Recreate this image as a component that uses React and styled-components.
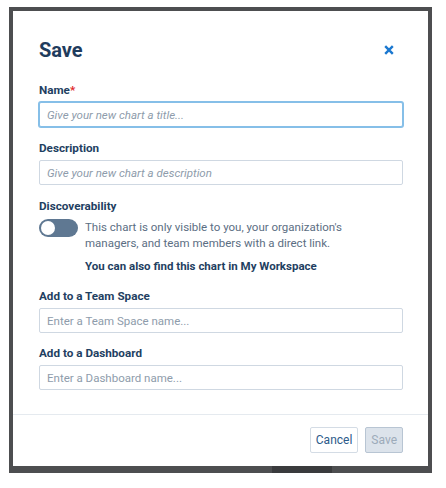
import React from "react";
import styled, { createGlobalStyle } from "styled-components";

const GlobalStyle = createGlobalStyle`
  html, body {
    margin: 0;
    padding: 0;
    background: #ffffff;
  }
  body {
    font-family: Roboto, "Noto Sans", sans-serif;
  }
  * {
    box-sizing: border-box;
  }
`;

const Backdrop = styled.div`
  width: 423px;
  height: 466px;
  margin: 7px 0 0 9px;
  padding: 4px 4px 0 4px;
  background: #4d4e50;
  display: flex;
  flex-direction: column;
`;

const Card = styled.div`
  width: 415px;
  height: 455px;
  background: #ffffff;
  display: flex;
  flex-direction: column;
`;

const BottomStrip = styled.div`
  height: 7px;
  display: flex;
  padding-left: 259px;
`;

const Tooltip = styled.div`
  width: 60px;
  height: 7px;
  background: #3a3b3d;
`;

const Header = styled.div`
  display: flex;
  align-items: center;
  justify-content: space-between;
  padding: 26px 34px 0 26px;
`;

const Title = styled.h2`
  margin: 0;
  font-size: 20px;
  line-height: 26px;
  font-weight: 700;
  color: #1f3c5d;
`;

const CloseButton = styled.button`
  border: none;
  background: none;
  padding: 0;
  width: 10px;
  height: 10px;
  display: flex;
  cursor: pointer;
`;

const Body = styled.div`
  flex: 1;
  display: flex;
  flex-direction: column;
  padding: 19px 25px 0 26px;
`;

const Field = styled.div`
  display: flex;
  flex-direction: column;
  margin-top: ${(p) => p.$top || 0}px;
`;

const Label = styled.label`
  font-size: 11.7px;
  line-height: 16px;
  font-weight: 700;
  color: #1f3f62;
  margin-bottom: ${(p) => p.$gap ?? 4}px;

  & span {
    color: #e0262a;
  }
`;

const Input = styled.input`
  height: 25px;
  width: 100%;
  border: 1px solid ${(p) => (p.$focused ? "#86bfe8" : "#cfd8e2")};
  box-shadow: ${(p) => (p.$focused ? "0 0 0 1px #86bfe8" : "none")};
  border-radius: 2px;
  padding: 0 7px;
  font-family: Roboto, "Noto Sans", sans-serif;
  font-size: 11.5px;
  color: #2a3f55;
  outline: none;

  &::placeholder {
    color: #8e9cab;
    font-style: ${(p) => (p.$italic ? "italic" : "normal")};
  }
`;

const ToggleRow = styled.div`
  display: flex;
  align-items: flex-start;
  gap: 7px;
`;

const Toggle = styled.div`
  flex: none;
  width: 39px;
  height: 18px;
  border-radius: 9px;
  background: #5f7892;
  padding: 2px;
  display: flex;
`;

const Knob = styled.div`
  width: 14px;
  height: 14px;
  border-radius: 50%;
  background: #ffffff;
`;

const HelpText = styled.p`
  margin: 0;
  font-size: 11.5px;
  line-height: 16px;
  color: #5b6e83;
`;

const Note = styled.p`
  margin: 7px 0 0 46px;
  font-size: 11.5px;
  line-height: 16px;
  font-weight: 700;
  color: #1f3f62;
`;

const Footer = styled.div`
  border-top: 1px solid #e5eaef;
  display: flex;
  justify-content: flex-end;
  gap: 7px;
  padding: 12px 25px 13px 0;
`;

const Button = styled.button`
  height: 26px;
  padding: 0 5px;
  border-radius: 2px;
  font-family: Roboto, "Noto Sans", sans-serif;
  font-size: 12px;
  border: 1px solid ${(p) => (p.$disabled ? "#b8c5d3" : "#d4dce5")};
  background: ${(p) => (p.$disabled ? "#dce3eb" : "#ffffff")};
  color: ${(p) => (p.$disabled ? "#9cabba" : "#2c5b8a")};
  cursor: ${(p) => (p.$disabled ? "default" : "pointer")};
`;

const CloseIcon = () => (
  <svg width="10" height="10" viewBox="0 0 10 10">
    <path d="M1.2 1.2 L8.8 8.8 M8.8 1.2 L1.2 8.8" stroke="#1b78d0" strokeWidth="2.4" />
  </svg>
);

export default function App() {
  return (
    <>
      <GlobalStyle />
      <Backdrop>
        <Card>
          <Header>
            <Title>Save</Title>
            <CloseButton aria-label="Close">
              <CloseIcon />
            </CloseButton>
          </Header>
          <Body>
            <Field>
              <Label>
                Name<span>*</span>
              </Label>
              <Input $focused $italic placeholder="Give your new chart a title..." />
            </Field>
            <Field $top={13}>
              <Label>Description</Label>
              <Input $italic placeholder="Give your new chart a description" />
            </Field>
            <Field $top={13}>
              <Label $gap={5}>Discoverability</Label>
              <ToggleRow>
                <Toggle>
                  <Knob />
                </Toggle>
                <HelpText>
                  This chart is only visible to you, your organization's
                  <br />
                  managers, and team members with a direct link.
                </HelpText>
              </ToggleRow>
              <Note>You can also find this chart in My Workspace</Note>
            </Field>
            <Field $top={14}>
              <Label>Add to a Team Space</Label>
              <Input placeholder="Enter a Team Space name..." />
            </Field>
            <Field $top={12}>
              <Label>Add to a Dashboard</Label>
              <Input placeholder="Enter a Dashboard name..." />
            </Field>
          </Body>
          <Footer>
            <Button>Cancel</Button>
            <Button $disabled>Save</Button>
          </Footer>
        </Card>
        <BottomStrip>
          <Tooltip />
        </BottomStrip>
      </Backdrop>
    </>
  );
}
